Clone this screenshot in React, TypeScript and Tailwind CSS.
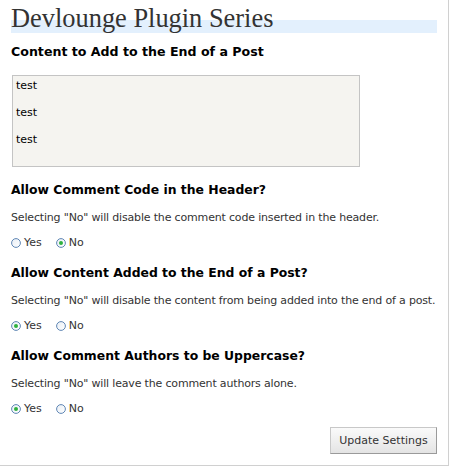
import React from "react";

function Radio({ checked }: { checked: boolean }) {
  return (
    <svg width="10" height="10" viewBox="0 0 10 10" className="block shrink-0">
      <defs>
        <linearGradient id={checked ? "rg1" : "rg0"} x1="0" y1="0" x2="1" y2="1">
          <stop offset="0" stopColor="#e8eef5" />
          <stop offset="1" stopColor="#ffffff" />
        </linearGradient>
      </defs>
      <circle cx="5" cy="5" r="4.4" fill={`url(#${checked ? "rg1" : "rg0"})`} stroke="#5f86b4" strokeWidth="1" />
      {checked && <circle cx="5" cy="5" r="2" fill="#2fb13f" />}
    </svg>
  );
}

function RadioRow({ yes }: { yes: boolean }) {
  return (
    <div className="mt-[11px] flex items-center h-[14px] leading-[14px] text-[11px] text-[#333]">
      <Radio checked={yes} />
      <span className="ml-[3px]">Yes</span>
      <span className="ml-[14px]">
        <Radio checked={!yes} />
      </span>
      <span className="ml-[3px]">No</span>
    </div>
  );
}

function Section({ title, desc, yes }: { title: string; desc: string; yes: boolean }) {
  return (
    <div className="mt-[15px]">
      <h3 className="text-[12.4px] font-bold leading-[16px] text-black whitespace-nowrap">{title}</h3>
      <p className="mt-[13px] text-[11px] tracking-[-0.17px] leading-[14px] text-[#333] whitespace-nowrap">{desc}</p>
      <RadioRow yes={yes} />
    </div>
  );
}

export default function App() {
  return (
    <div className="w-[449px] h-[466px] bg-white border-r border-b border-[#d0d0d0] pl-[11px] pr-[11px] font-['DejaVu_Sans',Verdana,sans-serif]">
      <div className="h-[33px] bg-[linear-gradient(to_bottom,transparent_20px,#e3f0fd_20px)]">
        <h1 className="block pt-[1px] leading-[34px] text-[26.4px] font-['Liberation_Serif','Times_New_Roman',serif] text-[#333] whitespace-nowrap">
          Devlounge Plugin Series
        </h1>
      </div>
      <h2 className="mt-[11px] text-[12.6px] font-bold leading-[16px] text-black whitespace-nowrap">
        Content to Add to the End of a Post
      </h2>
      <div className="mt-[15px] ml-[1px] w-[348px] h-[92px] border border-[#c4c4c4] bg-[#f5f4f0] pl-[3px] pt-[3px] text-[11px] leading-[14px] text-black">
        <p className="mb-[13px]">test</p>
        <p className="mb-[13px]">test</p>
        <p>test</p>
      </div>
      <Section
        title="Allow Comment Code in the Header?"
        desc={'Selecting "No" will disable the comment code inserted in the header.'}
        yes={false}
      />
      <Section
        title="Allow Content Added to the End of a Post?"
        desc={'Selecting "No" will disable the content from being added into the end of a post.'}
        yes={true}
      />
      <Section
        title="Allow Comment Authors to be Uppercase?"
        desc={'Selecting "No" will leave the comment authors alone.'}
        yes={true}
      />
      <div className="mt-[11px] flex justify-end">
        <button className="w-[107px] h-[27px] border border-[#c8c8c8] border-b-[#9a9a9a] border-r-[#9a9a9a] bg-[linear-gradient(to_bottom,#fafafa,#e4e4e4)] text-[11px] text-[#333] leading-[14px]">
          Update Settings
        </button>
      </div>
    </div>
  );
}
